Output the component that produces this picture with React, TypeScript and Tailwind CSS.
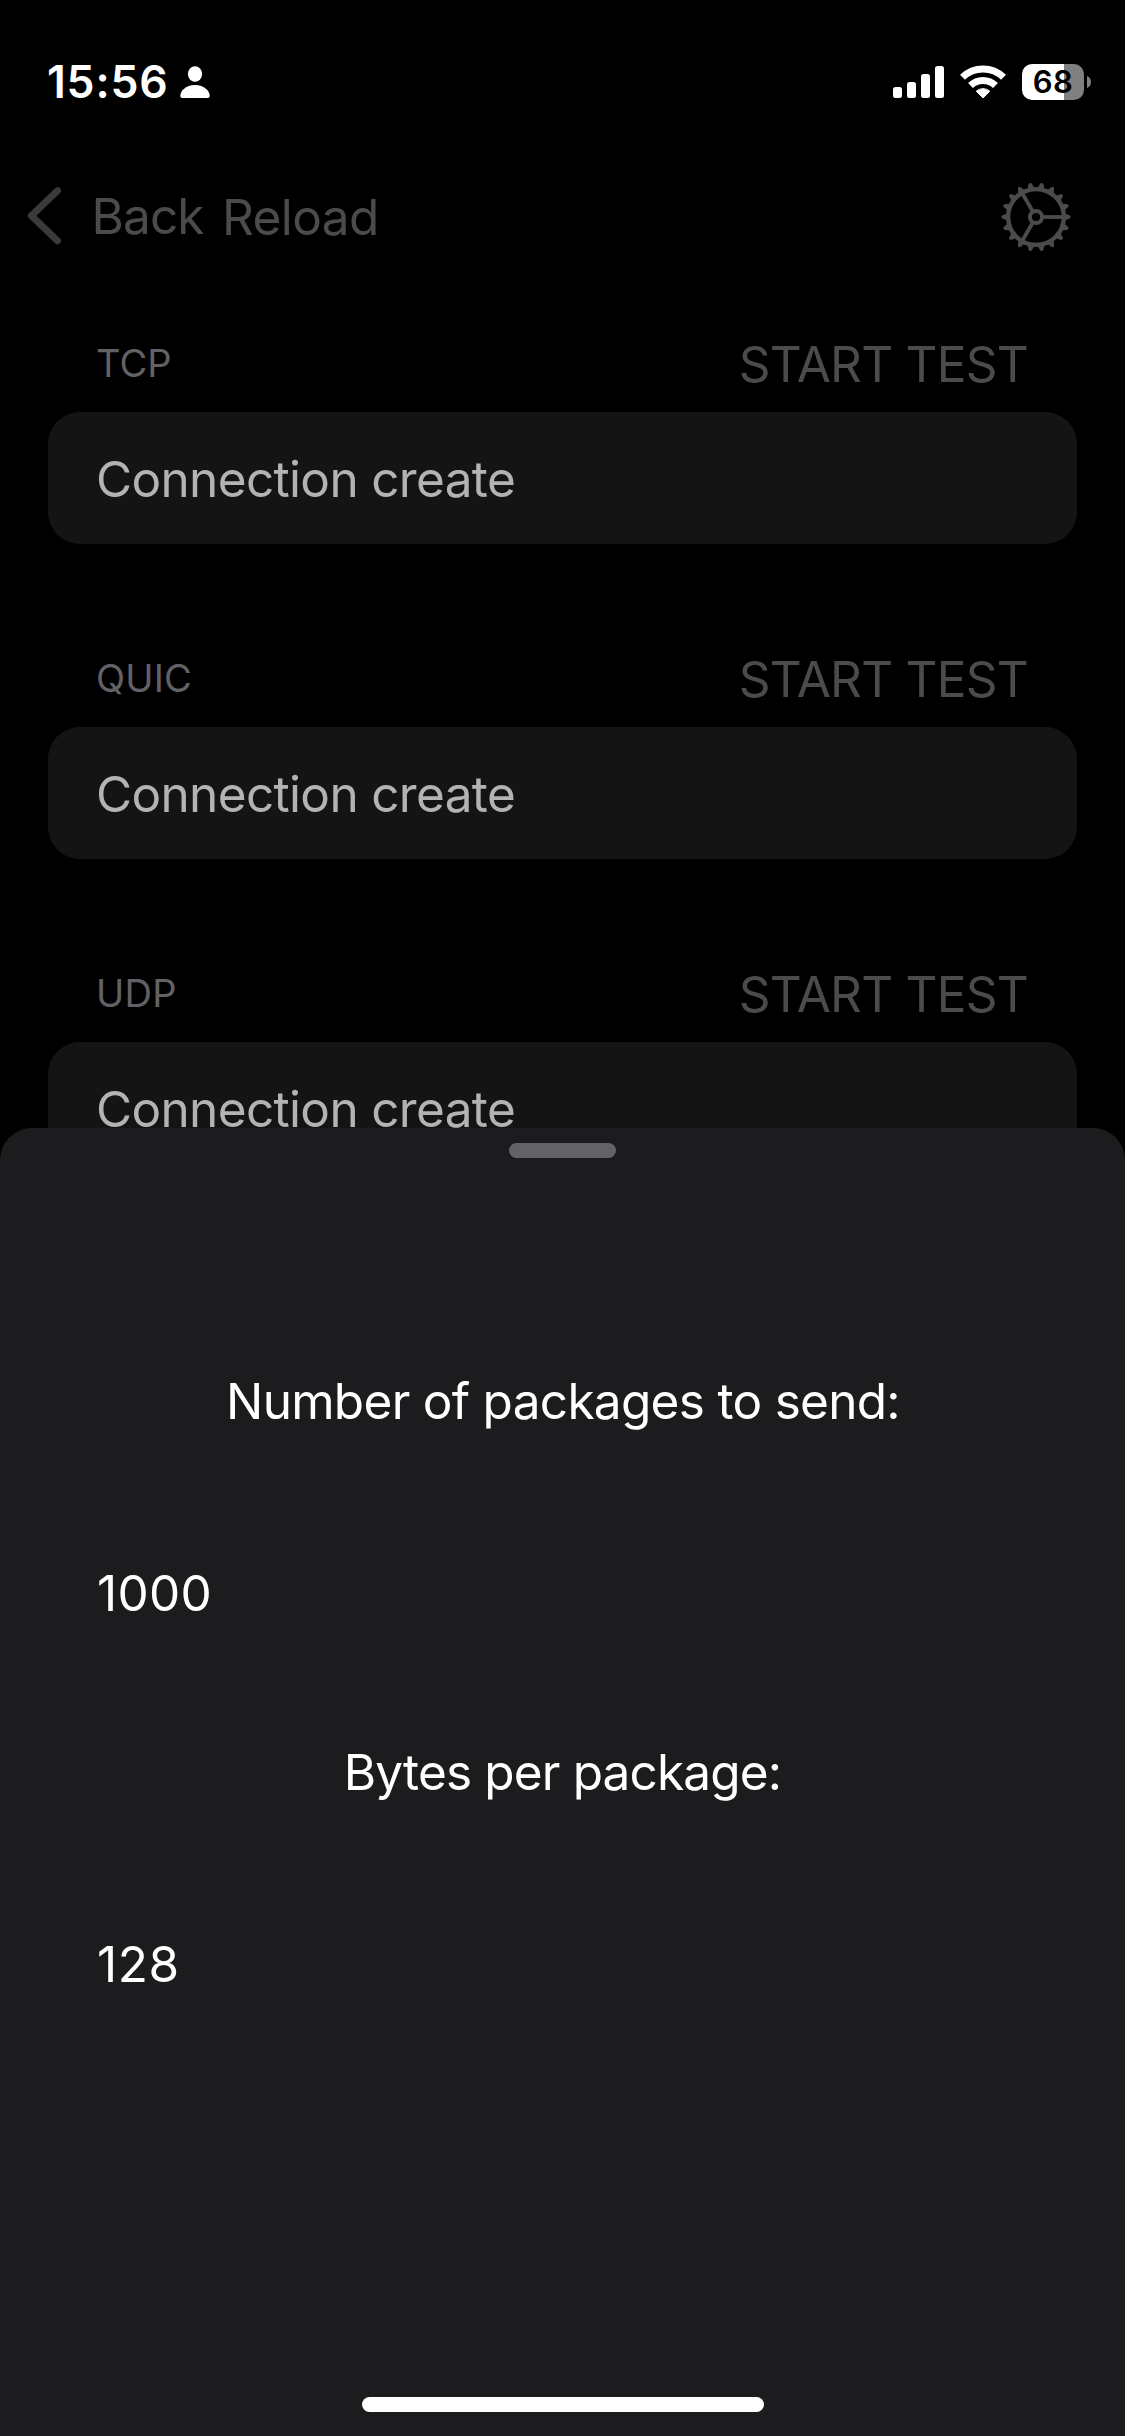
function PersonIcon() {
  return (
    <svg className="ml-[12px] h-[32px] w-[30px]" viewBox="0 0 30 32" fill="#fff">
      <ellipse cx="15" cy="8" rx="7.1" ry="7.7" />
      <path d="M2.6 32C1 32 .3 31.2 .3 29.8C.3 25.2 5.6 19 15 19S29.7 25.2 29.7 29.8C29.7 31.2 29 32 27.4 32Z" />
    </svg>
  );
}

function SignalIcon() {
  return (
    <svg className="h-[32px] w-[51px]" viewBox="0 0 51 32" fill="#fff">
      <rect x="0" y="21" width="9" height="11" rx="2.5" />
      <rect x="14" y="16" width="9" height="16" rx="2.5" />
      <rect x="28" y="8" width="9" height="24" rx="2.5" />
      <rect x="42" y="0" width="9" height="32" rx="2.5" />
    </svg>
  );
}

function WifiIcon() {
  return (
    <svg className="ml-[16px] h-[34px] w-[46px]" viewBox="0 0 46 34" fill="none" stroke="#fff">
      <path d="M2.5 12.3A29.5 29.5 0 0 1 43.5 12.3" strokeWidth="7" />
      <path d="M10.5 20.6A18 18 0 0 1 35.5 20.6" strokeWidth="7" />
      <path
        d="M16.2 26.2A10.3 10.3 0 0 1 29.8 26.2L23 33Z"
        fill="#fff"
        strokeWidth="1"
        strokeLinejoin="round"
      />
    </svg>
  );
}

function Battery() {
  return (
    <div className="ml-[16px] flex items-center">
      <div className="flex h-[36px] w-[62px] items-center justify-center rounded-[10px] bg-[linear-gradient(to_right,#fff_42px,#808080_42px)]">
        <span className="text-[31px] leading-[36px] font-semibold tracking-[0.5px] text-black">68</span>
      </div>
      <svg className="ml-[3px] h-[12px] w-[4px]" viewBox="0 0 4 12" fill="#808080">
        <path d="M0 0C2.6 1 4 3.2 4 6S2.6 11 0 12Z" />
      </svg>
    </div>
  );
}

const TEETH = Array.from({ length: 18 }, (_, i) => i * 20);
const SPOKES = [0, 120, 240];

function GearIcon() {
  return (
    <svg className="h-[70px] w-[70px]" viewBox="-35 -35 70 70" fill="#4b4b4b">
      <circle r="27.9" fill="none" stroke="#4b4b4b" strokeWidth="4.4" />
      <circle r="6.1" fill="none" stroke="#4b4b4b" strokeWidth="4" />
      {TEETH.map((a) => (
        <path
          key={a}
          transform={`rotate(${a})`}
          d="M28.5 -3.6L33.4 -1.7Q34.6 -1.2 34.6 0T33.4 1.7L28.5 3.6Z"
        />
      ))}
      {SPOKES.map((a) => (
        <rect key={a} transform={`rotate(${a})`} x="7.5" y="-1.9" width="20" height="3.8" />
      ))}
    </svg>
  );
}

function StatusBar() {
  return (
    <div className="flex h-[164px] items-center justify-between pr-[34px] pl-[47px]">
      <div className="flex items-center">
        <span className="text-[44.5px] leading-[60px] font-semibold tracking-[0.8px] text-white">15:56</span>
        <PersonIcon />
      </div>
      <div className="flex items-center">
        <SignalIcon />
        <WifiIcon />
        <Battery />
      </div>
    </div>
  );
}

function NavBar() {
  return (
    <div className="flex h-[104px] items-center pr-[54px] pl-[27px] text-[49.5px] leading-[60px] text-[#4b4b4b]">
      <svg
        className="h-[60px] w-[36px]"
        viewBox="0 0 36 60"
        fill="none"
        stroke="#3a3a3a"
        strokeWidth="7"
        strokeLinecap="round"
        strokeLinejoin="round"
      >
        <path d="M30.5 4.7L4.4 29.7L30.5 54.7" />
      </svg>
      <span className="ml-[28.5px] tracking-[-0.9px]">Back</span>
      <span className="ml-[18.5px] pt-[2px] tracking-[-0.6px]">Reload</span>
      <div className="ml-auto pt-[1px]">
        <GearIcon />
      </div>
    </div>
  );
}

const sections = [
  { name: "TCP", labelClass: "tracking-[0px]" },
  { name: "QUIC", labelClass: "tracking-[0.15px]" },
  { name: "UDP", labelClass: "tracking-[0.3px]" },
];

function Section({ name, labelClass }: { name: string; labelClass: string }) {
  return (
    <section className="mb-[87px]">
      <div className="flex h-[96px] items-center justify-between pr-[49px] pl-[48px]">
        <span className={`pb-[2px] text-[38px] leading-[60px] text-[#626166] ${labelClass}`}>{name}</span>
        <span className="text-[49.5px] leading-[60px] tracking-[-0.75px] text-[#4b4b4b]">START TEST</span>
      </div>
      <div className="flex h-[132px] items-center rounded-[32px] bg-[#141414] pt-[2px] pl-[48px]">
        <span className="text-[49.5px] leading-[60px] tracking-[-0.66px] text-[#b3b3b3]">Connection create</span>
      </div>
    </section>
  );
}

function SettingsSheet() {
  return (
    <div className="absolute inset-x-0 top-[1128px] bottom-0 flex flex-col rounded-t-[32px] bg-[#1c1c1e] pt-[15px] text-[49.5px] leading-[60px] text-white">
      <div className="mr-[509px] ml-[509px] h-[15px] w-[107px] rounded-[7.5px] bg-[#636267]" />
      <p className="mt-[213px] pl-[1px] text-center tracking-[-0.7px]">Number of packages to send:</p>
      <p className="mt-[132px] pl-[97px] tracking-[0.3px]">1000</p>
      <p className="mt-[119px] text-center tracking-[-0.84px]">Bytes per package:</p>
      <p className="mt-[132px] pl-[97px] tracking-[0.6px]">128</p>
      <div className="mx-auto mt-auto mb-[24px] h-[15px] w-[402px] rounded-full bg-white" />
    </div>
  );
}

export default function App() {
  return (
    <div className="relative h-[2436px] w-[1125px] overflow-hidden bg-black font-[Inter,sans-serif]">
      <StatusBar />
      <NavBar />
      <main className="mt-[48px] px-[48px]">
        {sections.map((s) => (
          <Section key={s.name} {...s} />
        ))}
      </main>
      <SettingsSheet />
    </div>
  );
}
